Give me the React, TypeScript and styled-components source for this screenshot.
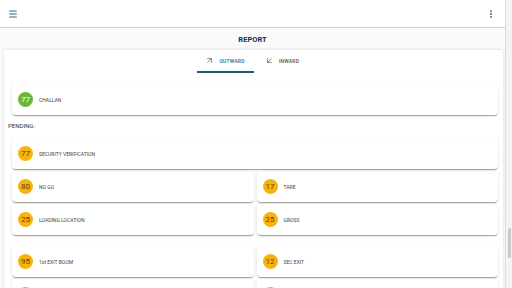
import React from 'react';
import styled, { createGlobalStyle } from 'styled-components';
import { Menu, MoreVertical, ArrowUpRight, ArrowDownLeft } from 'lucide-react';

const GlobalStyle = createGlobalStyle`
  body {
    margin: 0;
    background: #fafafa;
    font-family: Roboto, 'Noto Sans', sans-serif;
  }
`;

const Frame = styled.div`
  display: flex;
  height: 100vh;
  overflow: hidden;
`;

const Main = styled.main`
  flex: 1;
  min-width: 0;
`;

const ScrollTrack = styled.div`
  width: 6px;
  background: #f3f3f3;
  border-left: 1px solid #dedede;
  display: flex;
  justify-content: center;
`;

const ScrollThumb = styled.div`
  width: 3px;
  height: 30px;
  margin-top: 228px;
  background: #c9c9c9;
  border-radius: 2px;
`;

const Toolbar = styled.header`
  height: 27px;
  display: flex;
  align-items: center;
  justify-content: space-between;
  padding: 0 9px 0 8px;
  border-bottom: 1px solid #cfcfcf;
  background: #fff;
`;

const IconButton = styled.span<{ $color: string }>`
  display: flex;
  align-items: center;
  color: ${p => p.$color};
`;

const PageTitle = styled.h1`
  margin: 0;
  height: 22px;
  display: flex;
  align-items: center;
  justify-content: center;
  font-size: 7.5px;
  font-weight: 700;
  color: #17285a;
`;

const Panel = styled.section`
  margin: 0 2px 0 4px;
  background: #fff;
  box-shadow: 0 0 3px rgba(0, 0, 0, 0.14);
  padding-bottom: 20px;
`;

const TabBar = styled.nav`
  display: flex;
  justify-content: center;
  height: 23px;
`;

const Tab = styled.div<{ $active?: boolean }>`
  width: 57px;
  display: flex;
  align-items: center;
  justify-content: center;
  gap: 5px;
  font-size: 5px;
  font-weight: 500;
  letter-spacing: 0.2px;
  color: ${p => (p.$active ? '#2a6d84' : '#555')};
  border-bottom: 2px solid ${p => (p.$active ? '#1f5e6d' : 'transparent')};
  box-sizing: border-box;
`;

const Content = styled.div`
  padding: 11px 5px 0 8px;
`;

const SectionLabel = styled.div`
  font-size: 6px;
  color: #333;
  margin: 7px 0 0 -4px;
  height: 16px;
`;

const Row = styled.div<{ $gapAfter?: boolean }>`
  display: grid;
  grid-template-columns: 1fr 1fr;
  gap: 3px;
  margin-bottom: ${p => (p.$gapAfter ? '11px' : '2px')};
`;

const Card = styled.div<{ $wide?: boolean }>`
  grid-column: ${p => (p.$wide ? '1 / -1' : 'auto')};
  height: 31px;
  display: flex;
  align-items: center;
  gap: 6px;
  padding-left: 6px;
  background: #fff;
  border-radius: 4px;
  box-shadow: 0 2px 1px -1px rgba(0, 0, 0, 0.2), 0 1px 1px 0 rgba(0, 0, 0, 0.14),
    0 1px 3px 0 rgba(0, 0, 0, 0.12);
`;

const Count = styled.span<{ $tone: 'green' | 'amber' }>`
  width: 15px;
  height: 15px;
  border-radius: 50%;
  display: flex;
  align-items: center;
  justify-content: center;
  font-size: 8px;
  background: ${p => (p.$tone === 'green' ? '#6cb533' : '#f7b20c')};
  color: ${p => (p.$tone === 'green' ? '#fff' : '#5a4512')};
`;

const CardLabel = styled.span`
  font-size: 5px;
  color: #444;
`;

type Item = { count: number; label: string };

const StatCard = ({ item, tone = 'amber', wide }: { item: Item; tone?: 'green' | 'amber'; wide?: boolean }) => (
  <Card $wide={wide}>
    <Count $tone={tone}>{item.count}</Count>
    <CardLabel>{item.label}</CardLabel>
  </Card>
);

const pairs: { items: Item[]; gapAfter?: boolean }[] = [
  { items: [{ count: 80, label: 'NO GO' }, { count: 17, label: 'TARE' }] },
  { items: [{ count: 25, label: 'LOADING LOCATION' }, { count: 25, label: 'GROSS' }], gapAfter: true },
  { items: [{ count: 95, label: '1st EXIT BOOM' }, { count: 12, label: 'SEC EXIT' }] },
  { items: [{ count: 10, label: '2nd EXIT BOOM' }, { count: 8, label: 'OUT' }] },
];

export default function App() {
  return (
    <>
      <GlobalStyle />
      <Frame>
        <Main>
          <Toolbar>
            <IconButton $color="#2a6a88">
              <Menu size={10} strokeWidth={2.5} />
            </IconButton>
            <IconButton $color="#555">
              <MoreVertical size={10} strokeWidth={2.5} />
            </IconButton>
          </Toolbar>
          <PageTitle>REPORT</PageTitle>
          <Panel>
            <TabBar>
              <Tab $active>
                <ArrowUpRight size={9} strokeWidth={1.5} color="#333" />
                OUTWARD
              </Tab>
              <Tab>
                <ArrowDownLeft size={9} strokeWidth={1.5} color="#333" />
                INWARD
              </Tab>
            </TabBar>
            <Content>
              <Row>
                <StatCard wide tone="green" item={{ count: 77, label: 'CHALLAN' }} />
              </Row>
              <SectionLabel>PENDING:</SectionLabel>
              <Row>
                <StatCard wide item={{ count: 77, label: 'SECURITY VERIFICATION' }} />
              </Row>
              {pairs.map((row, i) => (
                <Row key={i} $gapAfter={row.gapAfter}>
                  {row.items.map(item => (
                    <StatCard key={item.label} item={item} />
                  ))}
                </Row>
              ))}
            </Content>
          </Panel>
        </Main>
        <ScrollTrack>
          <ScrollThumb />
        </ScrollTrack>
      </Frame>
    </>
  );
}
